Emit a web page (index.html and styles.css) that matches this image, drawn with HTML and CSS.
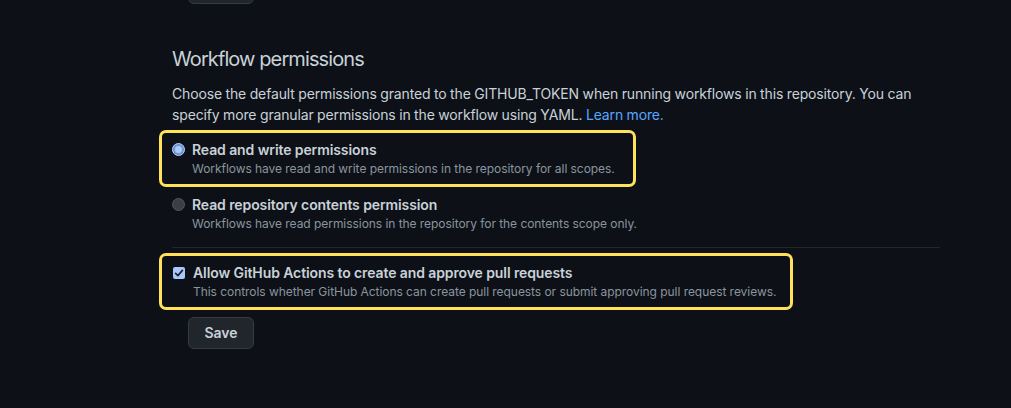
FILE: index.html
```html
<!DOCTYPE html>
<html lang="en">
<head>
<meta charset="utf-8">
<title>Workflow permissions</title>
<link rel="stylesheet" href="styles.css">
</head>
<body>
<div class="container">
  <button class="btn btn-top" type="button" aria-label="Save"></button>
  <h2 class="subhead">Workflow permissions</h2>
  <p class="lead">Choose the default permissions granted to the GITHUB_TOKEN when running workflows in this repository. You can specify more granular permissions in the workflow using YAML. <a href="#" class="link">Learn more.</a></p>

  <div class="highlight highlight-radio">
    <div class="option">
      <span class="radio radio-checked"><span class="radio-dot"></span></span>
      <div class="option-body">
        <div class="option-label">Read and write permissions</div>
        <div class="option-note">Workflows have read and write permissions in the repository for all scopes.</div>
      </div>
    </div>
  </div>

  <div class="option option-plain">
    <span class="radio"></span>
    <div class="option-body">
      <div class="option-label">Read repository contents permission</div>
      <div class="option-note">Workflows have read permissions in the repository for the contents scope only.</div>
    </div>
  </div>

  <hr class="divider">

  <div class="highlight highlight-check">
    <div class="option">
      <span class="checkbox">
        <svg viewBox="0 0 12 12" width="12" height="12" aria-hidden="true"><path d="M2.6 6.3 L4.9 8.6 L9.4 3.4" fill="none" stroke="#1c2433" stroke-width="1.7" stroke-linecap="round" stroke-linejoin="round"/></svg>
      </span>
      <div class="option-body">
        <div class="option-label">Allow GitHub Actions to create and approve pull requests</div>
        <div class="option-note">This controls whether GitHub Actions can create pull requests or submit approving pull request reviews.</div>
      </div>
    </div>
  </div>

  <button class="btn btn-save" type="button">Save</button>
</div>
</body>
</html>
```

FILE: styles.css
```css
* { box-sizing: border-box; }

html, body {
  margin: 0;
  padding: 0;
  background: #0d1117;
  height: 100%;
  overflow: hidden;
}

body {
  font-family: Inter, "Liberation Sans", sans-serif;
  color: #c9d1d9;
  font-size: 14px;
  line-height: 21px;
}

.container {
  margin-left: 172px;
  width: 768px;
}

.btn {
  display: block;
  height: 32px;
  width: 66px;
  margin-left: 16px;
  padding: 0;
  background: #21262d;
  border: 1px solid #363b42;
  border-radius: 6px;
  color: #c9d1d9;
  font-family: inherit;
  font-size: 14px;
  font-weight: 600;
  line-height: 30px;
  text-align: center;
}

.btn-top {
  margin-top: -28px;
}

.subhead {
  margin: 40px 0 0;
  font-size: 20px;
  font-weight: 400;
  line-height: 30px;
  color: #c9d1d9;
  letter-spacing: -0.9px;
}

.lead {
  margin: 9px 0 0;
  font-size: 14px;
  line-height: 21px;
  color: #c9d1d9;
  letter-spacing: -0.15px;
  word-spacing: -0.2px;
}

.link {
  color: #58a6ff;
  text-decoration: none;
}

.highlight {
  margin-left: -13px;
  border: 3px solid #ffe15a;
  border-radius: 7px;
  padding: 7px 12px 6px 10px;
}

.highlight-radio {
  margin-top: 5px;
  width: 477px;
}

.highlight-check {
  margin-top: 5px;
  width: 634px;
}

.option {
  display: flex;
  align-items: flex-start;
  gap: 7px;
}

.option-plain {
  padding-top: 8px;
}

.option-body {
  display: flex;
  flex-direction: column;
  white-space: nowrap;
}

.option-label {
  font-size: 14px;
  font-weight: 600;
  line-height: 20px;
  color: #c9d1d9;
  letter-spacing: -0.1px;
}

.option-note {
  font-size: 12px;
  line-height: 18px;
  color: #8b949e;
  letter-spacing: -0.05px;
}

.radio {
  flex: none;
  width: 13px;
  height: 13px;
  margin-top: 3px;
  border-radius: 50%;
  background: #3b3e43;
  border: 1px solid #55595f;
  display: flex;
  align-items: center;
  justify-content: center;
}

.radio-checked {
  background: #9ec2f7;
  border: 1px solid #aecdf9;
  box-shadow: inset 0 0 0 1px #5d83c4;
}

.radio-dot {
  width: 7px;
  height: 7px;
  border-radius: 50%;
  background: #a8cafc;
  box-shadow: 0 0 0 1px #6f93d3;
}

.checkbox {
  flex: none;
  width: 12px;
  height: 12px;
  margin-top: 4px;
  margin-left: 1px;
  margin-right: 1px;
  border-radius: 2px;
  background: #a8c7fa;
  display: flex;
}

.divider {
  margin: 14px 0 0;
  border: 0;
  border-top: 1px solid #21262d;
  height: 0;
}

.btn-save {
  margin-top: 7px;
}
```
